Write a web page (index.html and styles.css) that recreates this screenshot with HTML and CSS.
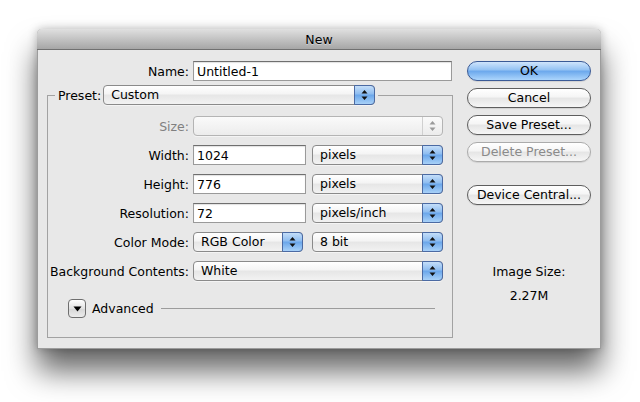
FILE: index.html
```html
<!DOCTYPE html>
<html lang="en">
<head>
  <meta charset="UTF-8" />
  <meta name="viewport" content="width=device-width, initial-scale=1.0"/>
  <title>New</title>
  <link rel="stylesheet" href="styles.css">
</head>
<body>
  <div class="window">
    <div class="titlebar">New</div>
    <div class="content">
      <div class="form">
        <div class="row name-row">
          <label>Name:</label>
          <input type="text" class="field name-field" value="Untitled-1">
        </div>

        <fieldset class="group">
          <legend>
            <label>Preset:</label>
            <div class="popup preset">Custom<span class="cap"><svg width="7" height="12" viewBox="0 0 7 12"><path d="M3.5 1 L6.5 4.5 H0.5Z M0.5 7.5 H6.5 L3.5 11Z"/></svg></span></div>
          </legend>

          <div class="row first">
            <label class="disabled">Size:</label>
            <div class="popup wide off"><span class="cap"><svg width="7" height="12" viewBox="0 0 7 12"><path d="M3.5 1 L6.5 4.5 H0.5Z M0.5 7.5 H6.5 L3.5 11Z"/></svg></span></div>
          </div>
          <div class="row">
            <label>Width:</label>
            <input type="text" class="field num" value="1024">
            <div class="popup unit">pixels<span class="cap"><svg width="7" height="12" viewBox="0 0 7 12"><path d="M3.5 1 L6.5 4.5 H0.5Z M0.5 7.5 H6.5 L3.5 11Z"/></svg></span></div>
          </div>
          <div class="row">
            <label>Height:</label>
            <input type="text" class="field num" value="776">
            <div class="popup unit">pixels<span class="cap"><svg width="7" height="12" viewBox="0 0 7 12"><path d="M3.5 1 L6.5 4.5 H0.5Z M0.5 7.5 H6.5 L3.5 11Z"/></svg></span></div>
          </div>
          <div class="row">
            <label>Resolution:</label>
            <input type="text" class="field num" value="72">
            <div class="popup unit">pixels/inch<span class="cap"><svg width="7" height="12" viewBox="0 0 7 12"><path d="M3.5 1 L6.5 4.5 H0.5Z M0.5 7.5 H6.5 L3.5 11Z"/></svg></span></div>
          </div>
          <div class="row">
            <label>Color Mode:</label>
            <div class="popup mode">RGB Color<span class="cap"><svg width="7" height="12" viewBox="0 0 7 12"><path d="M3.5 1 L6.5 4.5 H0.5Z M0.5 7.5 H6.5 L3.5 11Z"/></svg></span></div>
            <div class="popup unit">8 bit<span class="cap"><svg width="7" height="12" viewBox="0 0 7 12"><path d="M3.5 1 L6.5 4.5 H0.5Z M0.5 7.5 H6.5 L3.5 11Z"/></svg></span></div>
          </div>
          <div class="row">
            <label>Background Contents:</label>
            <div class="popup wide">White<span class="cap"><svg width="7" height="12" viewBox="0 0 7 12"><path d="M3.5 1 L6.5 4.5 H0.5Z M0.5 7.5 H6.5 L3.5 11Z"/></svg></span></div>
          </div>

          <div class="advanced">
            <div class="disclosure"><svg width="9" height="6" viewBox="0 0 9 6"><path d="M0.5 0.5 H8.5 L4.5 5.5Z"/></svg></div>
            <span>Advanced</span>
            <div class="rule"></div>
          </div>
        </fieldset>
      </div>

      <div class="side">
        <div class="btn default">OK</div>
        <div class="btn">Cancel</div>
        <div class="btn">Save Preset...</div>
        <div class="btn dim">Delete Preset...</div>
        <div class="btn central">Device Central...</div>
        <div class="image-size">
          <div>Image Size:</div>
          <div>2.27M</div>
        </div>
      </div>
    </div>
  </div>
</body>
</html>
```

FILE: styles.css
```css
html {
  background: #fff;
}
body {
  margin: 0;
  min-height: 402px;
  padding-top: 29px;
  box-sizing: border-box;
  background: #fff;
  font-family: "DejaVu Sans", sans-serif;
  font-size: 12.5px;
  color: #000;
}
.window {
  position: relative;
  box-sizing: border-box;
  width: 564px;
  margin-left: 37px;
  background: #e8e8e8;
  border: 1px solid #9c9c9c;
  border-top: none;
  border-radius: 5px 5px 0 0;
  box-shadow: 0 22px 30px rgba(0,0,0,0.6), 0 0 10px rgba(0,0,0,0.25);
}
.titlebar {
  height: 20px;
  line-height: 21px;
  text-align: center;
  margin: 0 -1px;
  background: linear-gradient(#e0e0e0, #a6a6a6);
  border-bottom: 1px solid #707070;
  border-radius: 5px 5px 0 0;
  text-shadow: 0 1px 0 rgba(255,255,255,0.4);
}
.content {
  display: flex;
  padding: 11px 9px 10px 9px;
}
.form {
  width: 406px;
}
.side {
  width: 124px;
  margin-left: auto;
}

/* rows */
.row {
  display: flex;
  align-items: center;
  height: 20px;
  margin-top: 9px;
}
.row.first {
  margin-top: 11px;
}
.row label {
  width: 141px;
  margin-right: 4px;
  text-align: right;
  white-space: nowrap;
}
.name-row {
  margin-top: 0;
}
.name-row label {
  width: 142px;
}
.disabled {
  color: #808080;
}

/* text fields */
.field {
  box-sizing: border-box;
  height: 20px;
  margin: 0;
  padding: 1px 3px 0;
  font: inherit;
  color: #000;
  background: #fff;
  border: 1px solid #9a9a9a;
  border-top-color: #6f6f6f;
  box-shadow: inset 0 1px 1px rgba(0,0,0,0.12);
  outline: none;
}
.name-field {
  width: 259px;
}
.num {
  width: 113px;
  margin-right: 6px;
}

/* popup menus */
.popup {
  box-sizing: border-box;
  position: relative;
  height: 20px;
  line-height: 18px;
  padding-left: 7px;
  border: 1px solid #8a8a8a;
  border-radius: 4px;
  background: linear-gradient(#ffffff 0%, #f4f4f4 45%, #e6e6e6 50%, #f2f2f2 100%);
  box-shadow: 0 1px 0 rgba(255,255,255,0.5);
  white-space: nowrap;
}
.popup .cap {
  position: absolute;
  top: -1px;
  right: -1px;
  bottom: -1px;
  width: 19px;
  display: flex;
  align-items: center;
  justify-content: center;
  border: 1px solid #4b6aa3;
  border-radius: 0 4px 4px 0;
  background: linear-gradient(#c4def9 0%, #8dbcf0 45%, #6aa6ea 50%, #a8d1f8 100%);
}
.popup .cap svg {
  fill: #111;
}
.popup.off {
  border-color: #b4b4b4;
  background: linear-gradient(#fafafa, #ececec);
}
.popup.off .cap {
  border: none;
  border-left: 1px solid #d0d0d0;
  top: 0;
  bottom: 0;
  right: 0;
  background: none;
}
.popup.off .cap svg {
  fill: #9a9a9a;
}
.preset {
  width: 272px;
}
.wide {
  width: 250px;
}
.unit {
  width: 131px;
}
.mode {
  width: 110px;
  margin-right: 9px;
}

/* group box */
.group {
  margin: 4px 0 0;
  padding: 0 0 19px;
  border: 1px solid #a2a2a2;
  min-width: 0;
}
.group legend {
  display: flex;
  align-items: center;
  margin-left: 7px;
  padding: 0 3px;
  height: 20px;
}
.group legend label {
  margin-right: 2px;
}

/* advanced */
.advanced {
  display: flex;
  align-items: center;
  margin-top: 18px;
  padding: 0 17px 0 20px;
}
.disclosure {
  box-sizing: border-box;
  width: 18px;
  height: 19px;
  margin-right: 6px;
  display: flex;
  align-items: center;
  justify-content: center;
  border: 1px solid #6e6e6e;
  border-radius: 4px;
  background: linear-gradient(#ffffff, #e2e2e2 50%, #d6d6d6 51%, #ececec);
}
.disclosure svg {
  fill: #000;
}
.rule {
  flex: 1;
  height: 1px;
  margin-left: 7px;
  background: #9c9c9c;
}

/* buttons */
.btn {
  box-sizing: border-box;
  height: 20px;
  line-height: 18px;
  margin-bottom: 7px;
  text-align: center;
  border: 1px solid #5e5e5e;
  border-radius: 10px;
  background: linear-gradient(#ffffff 0%, #f5f5f5 45%, #e5e5e5 50%, #f6f6f6 100%);
  box-shadow: 0 1px 1px rgba(0,0,0,0.1);
}
.btn.default {
  border-color: #3a5a96;
  background: linear-gradient(#cfe5fc 0%, #92c1f3 45%, #6aa7ec 50%, #acd5fc 100%);
}
.btn.dim {
  color: #8a8a8a;
  border-color: #ababab;
}
.btn.central {
  margin-top: 23px;
}
.image-size {
  margin-top: 55px;
  text-align: center;
  line-height: 24px;
}
```
